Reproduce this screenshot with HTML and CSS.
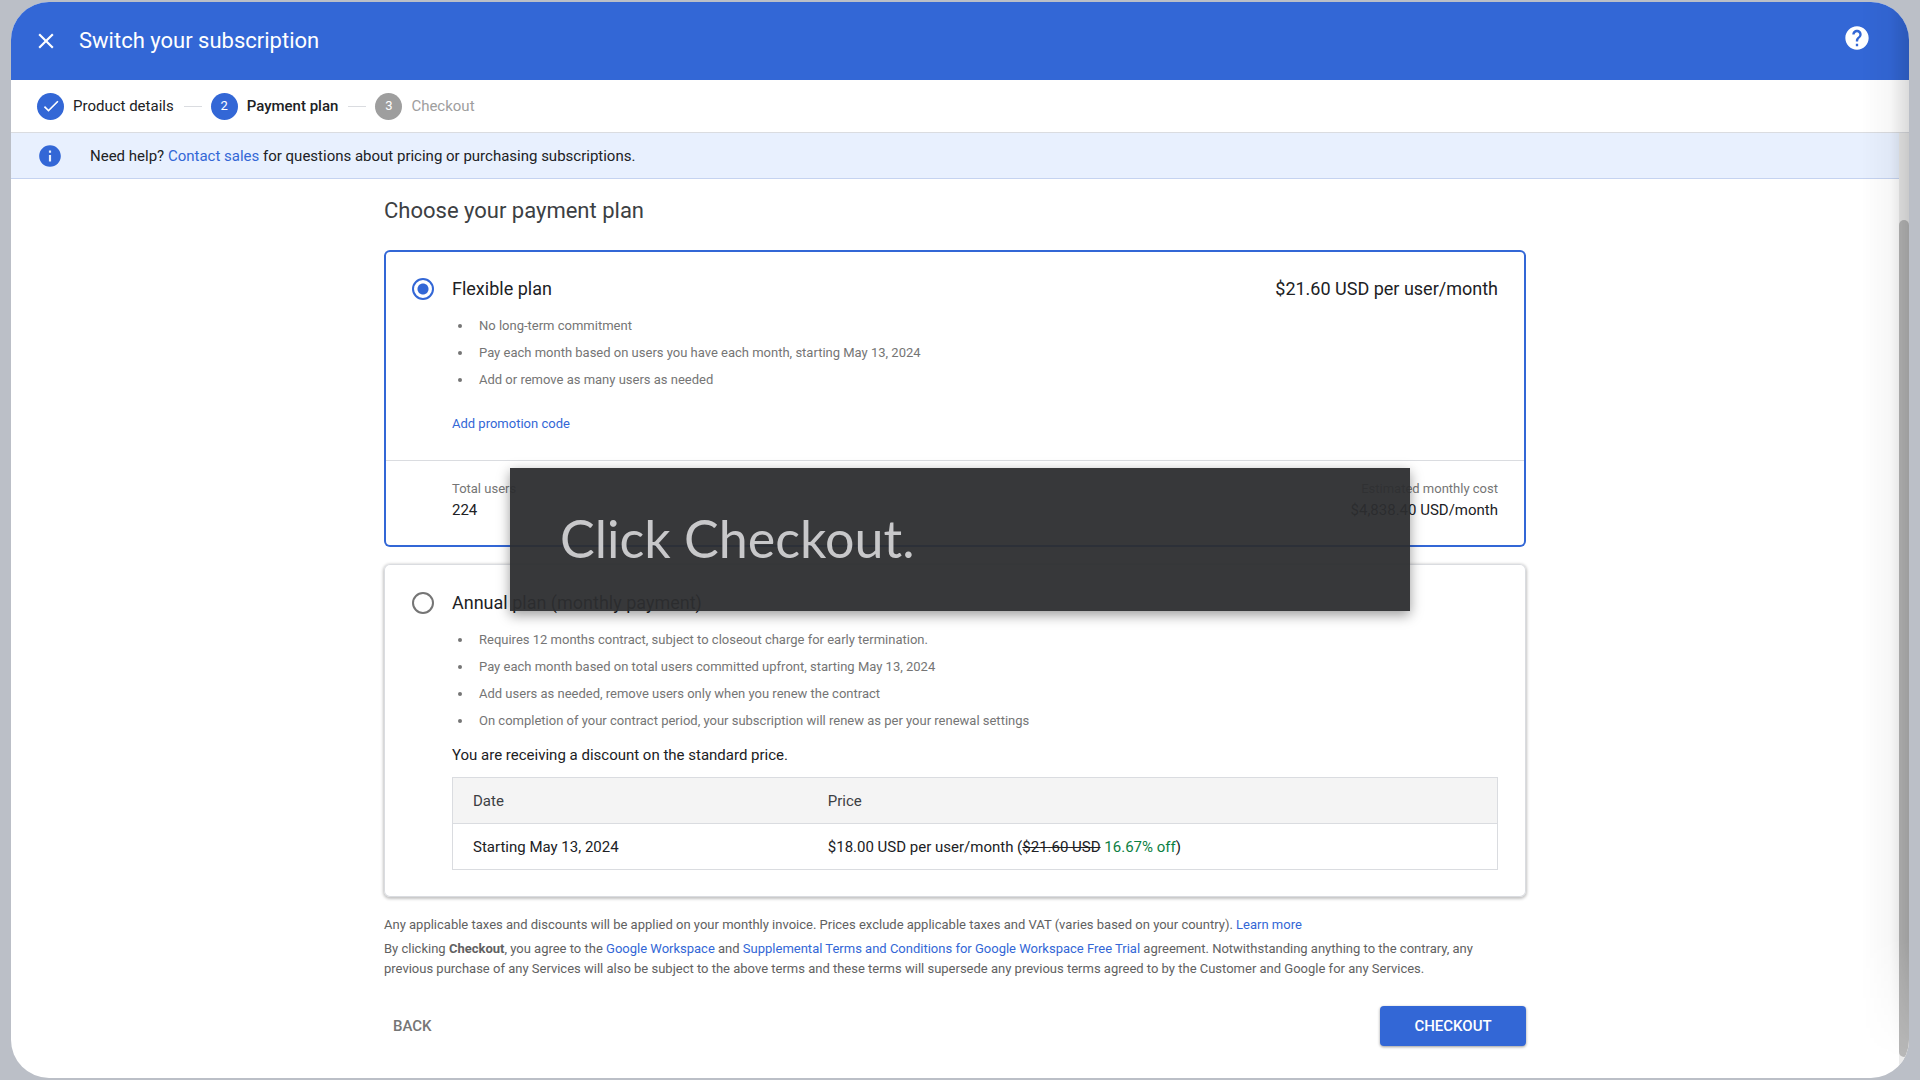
FILE: index.html
```html
<!DOCTYPE html>
<html lang="en">
<head>
<meta charset="utf-8">
<meta name="viewport" content="width=device-width, initial-scale=1">
<title>Switch your subscription</title>
<link rel="stylesheet" href="styles.css">
</head>
<body>
<div class="window">
  <header class="topbar">
    <button class="icon-button" type="button" aria-label="Close">
      <svg width="26" height="26" viewBox="0 0 24 24" fill="currentColor"><path d="M19 6.41 17.59 5 12 10.59 6.41 5 5 6.41 10.59 12 5 17.59 6.41 19 12 13.41 17.59 19 19 17.59 13.41 12z"/></svg>
    </button>
    <h1 class="topbar-title">Switch your subscription</h1>
    <button class="icon-button help" type="button" aria-label="Help">
      <svg width="28" height="28" viewBox="0 0 24 24" fill="currentColor"><path d="M12 2C6.48 2 2 6.48 2 12s4.480 10 10 10 10-4.480 10-10S17.520 2 12 2zm1 17h-2v-2h2v2zm2.070-7.750-.9.920C13.450 12.900 13 13.500 13 15h-2v-.5c0-1.100.450-2.100 1.170-2.830l1.240-1.260c.370-.360.590-.860.590-1.410 0-1.100-.9-2-2-2s-2 .9-2 2H8c0-2.210 1.790-4 4-4s4 1.790 4 4c0 .880-.360 1.680-.930 2.250z"/></svg>
    </button>
  </header>

  <ol class="stepper">
    <li class="step">
      <span class="step-mark"><svg width="20" height="20" viewBox="0 0 24 24" fill="currentColor"><path d="M9 16.170 4.830 12l-1.420 1.410L9 19 21 7l-1.410-1.410z"/></svg></span>
      <span>Product details</span>
    </li>
    <li class="step current">
      <span class="step-mark">2</span>
      <span>Payment plan</span>
    </li>
    <li class="step pending">
      <span class="step-mark">3</span>
      <span>Checkout</span>
    </li>
  </ol>

  <div class="notice">
    <svg class="notice-icon" width="26" height="26" viewBox="0 0 24 24" fill="currentColor"><path d="M12 2C6.480 2 2 6.480 2 12s4.480 10 10 10 10-4.480 10-10S17.520 2 12 2zm1 15h-2v-6h2v6zm0-8h-2V7h2v2z"/></svg>
    <p>Need help? <a href="#">Contact sales</a> for questions about pricing or purchasing subscriptions.</p>
  </div>

  <main class="content">
    <h2 class="heading">Choose your payment plan</h2>

    <section class="plan selected">
      <div class="plan-main">
        <input class="radio" type="radio" name="plan" id="flexible" checked>
        <div class="plan-body">
          <div class="plan-title">
            <label for="flexible">Flexible plan</label>
            <span>$21.60 USD per user/month</span>
          </div>
          <ul class="features">
            <li>No long-term commitment</li>
            <li>Pay each month based on users you have each month, starting May 13, 2024</li>
            <li>Add or remove as many users as needed</li>
          </ul>
          <a class="promo" href="#">Add promotion code</a>
        </div>
      </div>
      <dl class="totals">
        <div><dt>Total users</dt><dd>224</dd></div>
        <div class="cost"><dt>Estimated monthly cost</dt><dd>$4,838.40 USD/month</dd></div>
      </dl>
    </section>

    <section class="plan">
      <div class="plan-main">
        <input class="radio" type="radio" name="plan" id="annual">
        <div class="plan-body">
          <div class="plan-title">
            <label for="annual">Annual plan (monthly payment)</label>
          </div>
          <ul class="features">
            <li>Requires 12 months contract, subject to closeout charge for early termination.</li>
            <li>Pay each month based on total users committed upfront, starting May 13, 2024</li>
            <li>Add users as needed, remove users only when you renew the contract</li>
            <li>On completion of your contract period, your subscription will renew as per your renewal settings</li>
          </ul>
          <p class="discount">You are receiving a discount on the standard price.</p>
          <table class="prices">
            <thead>
              <tr><th scope="col">Date</th><th scope="col">Price</th></tr>
            </thead>
            <tbody>
              <tr><td>Starting May 13, 2024</td><td>$18.00 USD per user/month (<s>$21.60 USD</s> <span class="off">16.67% off</span>)</td></tr>
            </tbody>
          </table>
        </div>
      </div>
    </section>

    <div class="terms">
      <p>Any applicable taxes and discounts will be applied on your monthly invoice. Prices exclude applicable taxes and VAT (varies based on your country). <a href="#">Learn more</a></p>
      <p>By clicking <b>Checkout</b>, you agree to the <a href="#">Google Workspace</a> and <a href="#">Supplemental Terms and Conditions for Google Workspace Free Trial</a> agreement. Notwithstanding anything to the contrary, any previous purchase of any Services will also be subject to the above terms and these terms will supersede any previous terms agreed to by the Customer and Google for any Services.</p>
    </div>

    <div class="actions">
      <button class="button back" type="button">BACK</button>
      <button class="button checkout" type="button">CHECKOUT</button>
    </div>
  </main>

  <div class="scrollbar"><div class="thumb"></div></div>
  <div class="edge-shade"></div>
</div>
<div class="caption" role="status">Click Checkout.</div>
</body>
</html>
```

FILE: styles.css
```css
* { box-sizing: border-box; }

body {
  position: relative;
  display: flex;
  min-height: 100vh;
  margin: 0;
  padding: 2px 11px;
  background: #bbbfc7;
  color: #202124;
  font: 15px/20px Roboto, "Liberation Sans", sans-serif;
}

h1, h2, p, ul, ol, dl, dd { margin: 0; padding: 0; }
a { color: #3367d6; text-decoration: none; }

.window {
  position: relative;
  flex: 1;
  min-width: 0;
  overflow: hidden;
  border-radius: 38px;
  background: #fff;
}

.topbar {
  display: flex;
  align-items: center;
  gap: 20px;
  height: 78px;
  padding: 0 38px 0 22px;
  background: #3367d6;
  color: #fff;
}
.topbar-title { flex: 1; font-size: 22px; line-height: 28px; font-weight: 400; }
.icon-button {
  display: flex;
  padding: 0;
  border: 0;
  background: none;
  color: inherit;
}
.help { align-self: flex-start; margin-top: 22px; }

.stepper {
  display: flex;
  align-items: center;
  height: 53px;
  padding: 0 26px;
  border-bottom: 1px solid #dadce0;
  list-style: none;
}
.step { display: flex; align-items: center; gap: 9px; }
.step + .step::before {
  content: "";
  width: 18px;
  height: 1px;
  margin-left: 10px;
  background: #dadce0;
}
.step-mark {
  display: flex;
  align-items: center;
  justify-content: center;
  width: 27px;
  height: 27px;
  border-radius: 50%;
  background: #3367d6;
  color: #fff;
  font-size: 13px;
  font-weight: 400;
}
.current { font-weight: 500; }
.pending { color: #9e9e9e; }
.pending .step-mark { background: #9e9e9e; }

.notice {
  display: flex;
  align-items: center;
  gap: 27px;
  height: 46px;
  margin-right: 10px;
  padding: 0 26px;
  border-bottom: 1px solid #c5d3f0;
  background: #e8f0fe;
}
.notice-icon { color: #3367d6; }

.content {
  max-width: 1152px;
  margin: 0 auto;
  padding: 18px 10px 30px 0;
}
.heading {
  margin-bottom: 25px;
  color: #3c4043;
  font-size: 22px;
  line-height: 28px;
  font-weight: 400;
}

.plan {
  margin-bottom: 17px;
  border-radius: 6px;
  box-shadow: inset 0 0 0 1px #dadce0, 0 1px 3px 1px rgba(0, 0, 0, .24);
}
.plan.selected { box-shadow: inset 0 0 0 2px #3367d6; }
.plan-main {
  display: flex;
  gap: 18px;
  padding: 27px 28px;
}
.radio {
  appearance: none;
  flex: none;
  width: 22px;
  height: 22px;
  margin: 1px 0;
  border: 2px solid #757575;
  border-radius: 50%;
}
.radio:checked {
  border-color: #3367d6;
  background: radial-gradient(circle, #3367d6 5px, transparent 6px);
}
.plan-body { flex: 1; min-width: 0; }
.plan-title {
  display: flex;
  justify-content: space-between;
  font-size: 18px;
  line-height: 24px;
}
.features {
  margin: 11px 0;
  padding-left: 21px;
  color: #757575;
  font-size: 13px;
  line-height: 27px;
}
.features li { padding-left: 6px; }
.promo { display: block; margin-top: 22px; font-size: 13px; line-height: 18px; }
.features + .promo { padding-top: 0; }
.totals {
  display: flex;
  justify-content: space-between;
  margin: 0 2px;
  padding: 18px 26px 26px 66px;
  border-top: 1px solid #dadce0;
}
.totals dt { color: #757575; font-size: 13px; line-height: 20px; }
.totals dd { line-height: 22px; }
.cost { text-align: right; }

.discount { margin-bottom: 12px; }
.prices {
  width: 100%;
  border: 1px solid #dadce0;
  border-collapse: collapse;
  table-layout: fixed;
}
.prices th, .prices td {
  height: 46px;
  padding: 0 20px;
  border-top: 1px solid #dadce0;
  text-align: left;
  font-weight: 400;
}
.prices th { background: #f4f4f4; color: #3c4043; }
.prices th:first-child { width: 34%; }
.off { color: #0b8043; }

.terms {
  display: grid;
  gap: 4px;
  padding: 1px 16px 0 0;
  color: #616161;
  font-size: 13px;
  line-height: 20px;
}
.terms b { font-weight: 700; }

.actions {
  display: flex;
  justify-content: space-between;
  margin-top: 27px;
}
.button {
  height: 40px;
  border: 0;
  border-radius: 4px;
  font: 500 15px/20px Roboto, "Liberation Sans", sans-serif;
}
.back { padding: 0 9px; background: none; color: #757575; }
.checkout {
  width: 146px;
  background: #3367d6;
  color: #fff;
  box-shadow: 0 1px 3px rgba(0, 0, 0, .4);
}

.scrollbar {
  position: absolute;
  top: 131px;
  right: 0;
  bottom: 0;
  width: 10px;
  padding: 87px 0 21px;
  background: #ececec;
}
.thumb { height: 100%; border-radius: 5px; background: #b8b8b8; }
.edge-shade {
  position: absolute;
  inset: 0 0 0 auto;
  width: 48px;
  background: linear-gradient(to right, rgba(0, 0, 0, 0), rgba(0, 0, 0, .03) 60%, rgba(0, 0, 0, .14));
  mask-image: linear-gradient(to top, transparent 20px, #000 140px);
  pointer-events: none;
}

.caption {
  position: absolute;
  top: 468px;
  left: 50%;
  width: 900px;
  height: 143px;
  margin-left: -450px;
  padding: 0 50px;
  background: rgba(44, 45, 47, .95);
  box-shadow: 0 4px 12px rgba(0, 0, 0, .4);
  color: #c8c8ca;
  font: 52px/140px Lato, "Open Sans", sans-serif;
}
```
